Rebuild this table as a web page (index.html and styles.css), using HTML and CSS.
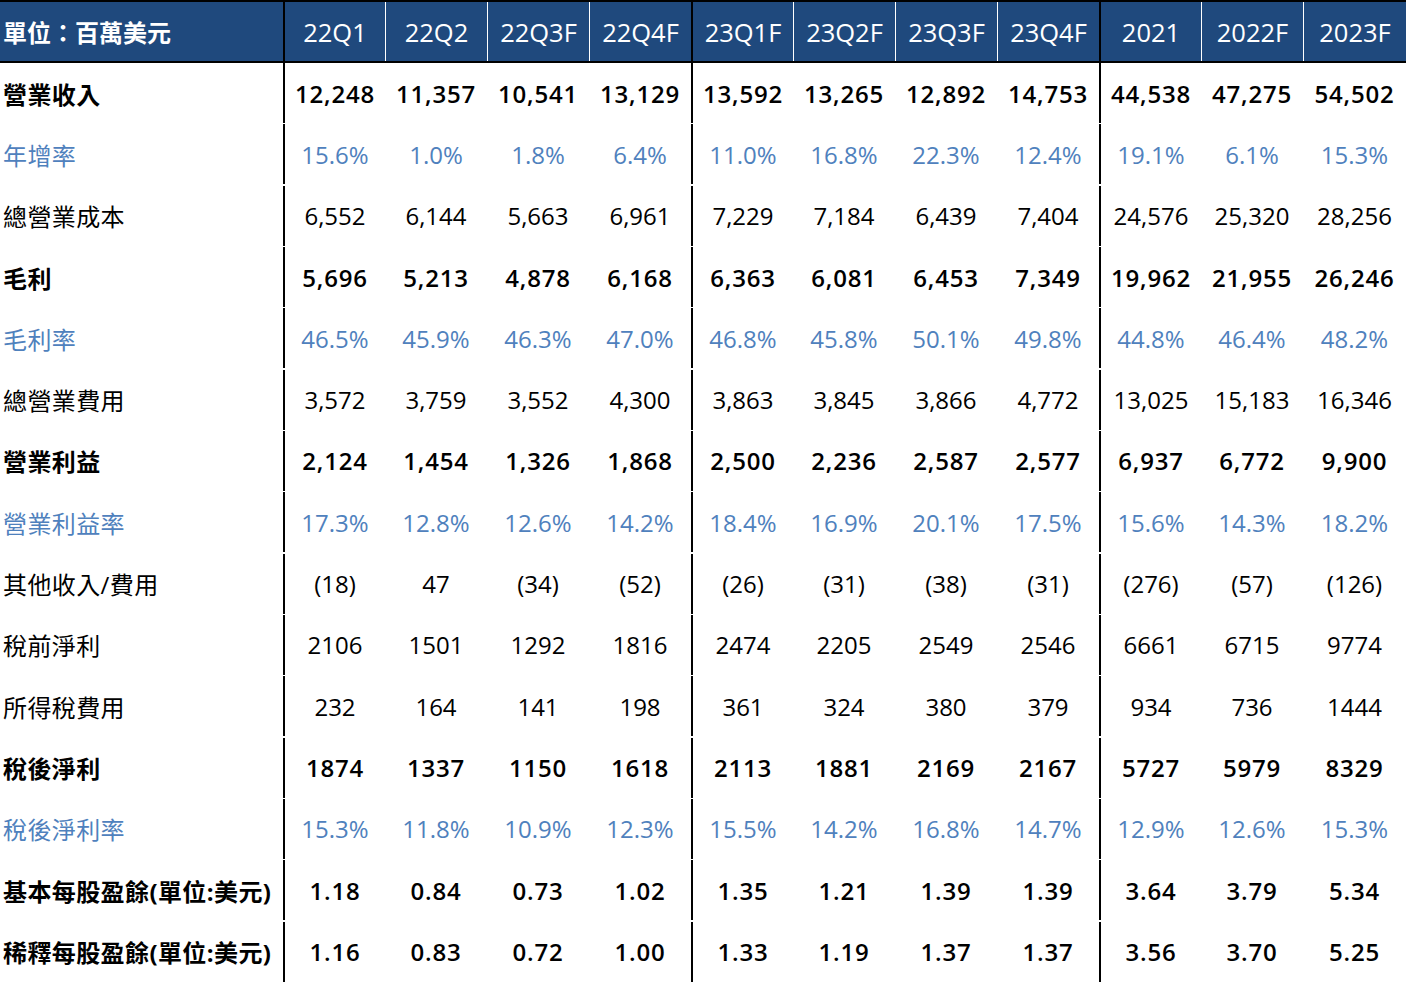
FILE: index.html
```html
<!DOCTYPE html>
<html lang="zh-Hant">
<head>
<meta charset="utf-8">
<title>財務預估</title>
<link rel="stylesheet" href="styles.css">
</head>
<body>
<div class="sheet">
  <div class="hrow">
    <div class="hc lab">單位：百萬美元</div>
    <div class="hc g">22Q1</div><div class="hc">22Q2</div><div class="hc">22Q3F</div><div class="hc">22Q4F</div>
    <div class="hc g">23Q1F</div><div class="hc">23Q2F</div><div class="hc">23Q3F</div><div class="hc">23Q4F</div>
    <div class="hc g">2021</div><div class="hc">2022F</div><div class="hc">2023F</div>
  </div>
  <div class="body">
    <div class="row bold"><div class="c lab">營業收入</div><div class="c g">12,248</div><div class="c">11,357</div><div class="c">10,541</div><div class="c">13,129</div><div class="c g">13,592</div><div class="c">13,265</div><div class="c">12,892</div><div class="c">14,753</div><div class="c g">44,538</div><div class="c">47,275</div><div class="c">54,502</div></div>
    <div class="row blue"><div class="c lab">年增率</div><div class="c g">15.6%</div><div class="c">1.0%</div><div class="c">1.8%</div><div class="c">6.4%</div><div class="c g">11.0%</div><div class="c">16.8%</div><div class="c">22.3%</div><div class="c">12.4%</div><div class="c g">19.1%</div><div class="c">6.1%</div><div class="c">15.3%</div></div>
    <div class="row"><div class="c lab">總營業成本</div><div class="c g">6,552</div><div class="c">6,144</div><div class="c">5,663</div><div class="c">6,961</div><div class="c g">7,229</div><div class="c">7,184</div><div class="c">6,439</div><div class="c">7,404</div><div class="c g">24,576</div><div class="c">25,320</div><div class="c">28,256</div></div>
    <div class="row bold"><div class="c lab">毛利</div><div class="c g">5,696</div><div class="c">5,213</div><div class="c">4,878</div><div class="c">6,168</div><div class="c g">6,363</div><div class="c">6,081</div><div class="c">6,453</div><div class="c">7,349</div><div class="c g">19,962</div><div class="c">21,955</div><div class="c">26,246</div></div>
    <div class="row blue"><div class="c lab">毛利率</div><div class="c g">46.5%</div><div class="c">45.9%</div><div class="c">46.3%</div><div class="c">47.0%</div><div class="c g">46.8%</div><div class="c">45.8%</div><div class="c">50.1%</div><div class="c">49.8%</div><div class="c g">44.8%</div><div class="c">46.4%</div><div class="c">48.2%</div></div>
    <div class="row"><div class="c lab">總營業費用</div><div class="c g">3,572</div><div class="c">3,759</div><div class="c">3,552</div><div class="c">4,300</div><div class="c g">3,863</div><div class="c">3,845</div><div class="c">3,866</div><div class="c">4,772</div><div class="c g">13,025</div><div class="c">15,183</div><div class="c">16,346</div></div>
    <div class="row bold"><div class="c lab">營業利益</div><div class="c g">2,124</div><div class="c">1,454</div><div class="c">1,326</div><div class="c">1,868</div><div class="c g">2,500</div><div class="c">2,236</div><div class="c">2,587</div><div class="c">2,577</div><div class="c g">6,937</div><div class="c">6,772</div><div class="c">9,900</div></div>
    <div class="row blue"><div class="c lab">營業利益率</div><div class="c g">17.3%</div><div class="c">12.8%</div><div class="c">12.6%</div><div class="c">14.2%</div><div class="c g">18.4%</div><div class="c">16.9%</div><div class="c">20.1%</div><div class="c">17.5%</div><div class="c g">15.6%</div><div class="c">14.3%</div><div class="c">18.2%</div></div>
    <div class="row"><div class="c lab">其他收入/費用</div><div class="c g">(18)</div><div class="c">47</div><div class="c">(34)</div><div class="c">(52)</div><div class="c g">(26)</div><div class="c">(31)</div><div class="c">(38)</div><div class="c">(31)</div><div class="c g">(276)</div><div class="c">(57)</div><div class="c">(126)</div></div>
    <div class="row"><div class="c lab">稅前淨利</div><div class="c g">2106</div><div class="c">1501</div><div class="c">1292</div><div class="c">1816</div><div class="c g">2474</div><div class="c">2205</div><div class="c">2549</div><div class="c">2546</div><div class="c g">6661</div><div class="c">6715</div><div class="c">9774</div></div>
    <div class="row"><div class="c lab">所得稅費用</div><div class="c g">232</div><div class="c">164</div><div class="c">141</div><div class="c">198</div><div class="c g">361</div><div class="c">324</div><div class="c">380</div><div class="c">379</div><div class="c g">934</div><div class="c">736</div><div class="c">1444</div></div>
    <div class="row bold"><div class="c lab">稅後淨利</div><div class="c g">1874</div><div class="c">1337</div><div class="c">1150</div><div class="c">1618</div><div class="c g">2113</div><div class="c">1881</div><div class="c">2169</div><div class="c">2167</div><div class="c g">5727</div><div class="c">5979</div><div class="c">8329</div></div>
    <div class="row blue"><div class="c lab">稅後淨利率</div><div class="c g">15.3%</div><div class="c">11.8%</div><div class="c">10.9%</div><div class="c">12.3%</div><div class="c g">15.5%</div><div class="c">14.2%</div><div class="c">16.8%</div><div class="c">14.7%</div><div class="c g">12.9%</div><div class="c">12.6%</div><div class="c">15.3%</div></div>
    <div class="row bold"><div class="c lab">基本每股盈餘(單位:美元)</div><div class="c g">1.18</div><div class="c">0.84</div><div class="c">0.73</div><div class="c">1.02</div><div class="c g">1.35</div><div class="c">1.21</div><div class="c">1.39</div><div class="c">1.39</div><div class="c g">3.64</div><div class="c">3.79</div><div class="c">5.34</div></div>
    <div class="row bold"><div class="c lab">稀釋每股盈餘(單位:美元)</div><div class="c g">1.16</div><div class="c">0.83</div><div class="c">0.72</div><div class="c">1.00</div><div class="c g">1.33</div><div class="c">1.19</div><div class="c">1.37</div><div class="c">1.37</div><div class="c g">3.56</div><div class="c">3.70</div><div class="c">5.25</div></div>
  </div>
</div>
</body>
</html>
```

FILE: styles.css
```css
* { box-sizing: border-box; }
html, body { margin: 0; padding: 0; background: #fff; }
body {
  font-family: "Open Sans", "Noto Sans", "Noto Sans CJK TC", sans-serif;
  font-size: 24px;
  color: #000;
}
.sheet {
  width: 1406px;
  height: 983px;
  display: flex;
  flex-direction: column;
  overflow: hidden;
}
.hrow, .row {
  display: grid;
  grid-template-columns: 283px repeat(10, 102px) 103px;
}
.hrow {
  height: 63px;
  background: #1f497d;
  border-top: 2px solid #000;
  border-bottom: 2px solid #000;
  color: #fff;
}
.hc {
  display: flex;
  align-items: center;
  justify-content: center;
  border-left: 1px solid #fff;
  white-space: nowrap;
  font-size: 25.5px;
}
.hc.lab {
  justify-content: flex-start;
  padding-left: 3px;
  border-left: 0;
  font-size: 24px;
  font-weight: 700;
}
.hc.g { border-left: 2px solid #000; }
.body {
  flex: 1;
  display: flex;
  flex-direction: column;
}
.row {
  flex: 1;
  padding-bottom: 1.3px;
}
.c {
  display: flex;
  align-items: center;
  justify-content: center;
  white-space: nowrap;
}
.c.lab {
  justify-content: flex-start;
  padding-left: 3px;
  letter-spacing: 0.4px;
}
.c.g { border-left: 2px solid #000; }
.bold .c { font-weight: 600; letter-spacing: 0.8px; }
.bold .c.lab { font-weight: 700; letter-spacing: 0.4px; }
.blue .c { color: #4f81bd; }
```
